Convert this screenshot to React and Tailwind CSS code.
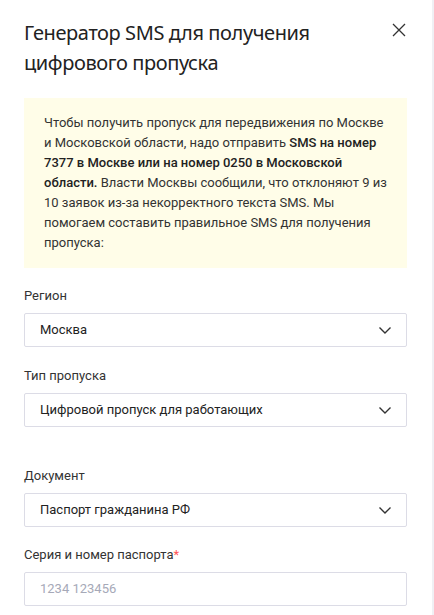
import React from 'react';

function Chevron() {
  return (
    <svg width="14" height="14" viewBox="0 0 14 14" fill="none" className="shrink-0">
      <path d="M1.5 4.5L7 10L12.5 4.5" stroke="#333" strokeWidth="1.4" />
    </svg>
  );
}

function Select({ label, value, className = '' }) {
  return (
    <div className={className}>
      <div className="text-[13px] leading-[20px] text-[#333]">{label}</div>
      <div className="mt-[7px] h-[34px] border border-[#dcdce6] rounded-[2px] flex items-center justify-between pl-[15px] pr-[14px]">
        <span className="text-[13px] text-[#222]">{value}</span>
        <Chevron />
      </div>
    </div>
  );
}

export default function App() {
  return (
    <div className="w-[434px] h-[615px] flex bg-white overflow-hidden" style={{ fontFamily: 'Roboto, "Noto Sans", sans-serif' }}>
      <div className="w-[432px] pl-6 pr-[25px] pt-[18px]">
        <div className="flex justify-between">
          <h1 className="text-[20px] leading-[30px] tracking-[-0.4px] text-[#222] w-[320px]" style={{ fontFamily: '"Noto Sans", Inter, sans-serif' }}>
            Генератор SMS для получения цифрового пропуска
          </h1>
          <svg width="14" height="14" viewBox="0 0 14 14" className="mt-[5px] mr-[1px]">
            <path d="M1 1L13 13M13 1L1 13" stroke="#333" strokeWidth="1.3" />
          </svg>
        </div>

        <div className="mt-5 bg-[#fffde8] pl-5 pr-4 py-[15px] text-[13px] leading-[20px] text-[#333]">
          Чтобы получить пропуск для передвижения по Москве и Московской области, надо отправить{' '}
          <b className="font-medium text-[#222]">SMS на номер 7377 в Москве или на номер 0250 в Московской области.</b>{' '}
          Власти Москвы сообщили, что отклоняют 9 из 10 заявок из-за некорректного текста SMS. Мы помогаем составить правильное SMS для получения пропуска:
        </div>

        <Select className="mt-[18px]" label="Регион" value="Москва" />
        <Select className="mt-[19px]" label="Тип пропуска" value="Цифровой пропуск для работающих" />
        <Select className="mt-[39px]" label="Документ" value="Паспорт гражданина РФ" />

        <div className="mt-[18px]">
          <div className="text-[13px] leading-[20px] text-[#333]">
            Серия и номер паспорта<span className="text-[#f55]">*</span>
          </div>
          <div className="mt-[7px] h-[34px] border border-[#dcdce6] rounded-[2px] flex items-center pl-[15px]">
            <span className="text-[13px] text-[#a6a9b8]">1234 123456</span>
          </div>
        </div>
      </div>
      <div className="w-[2px] bg-[#f0f0f4]" />
    </div>
  );
}
